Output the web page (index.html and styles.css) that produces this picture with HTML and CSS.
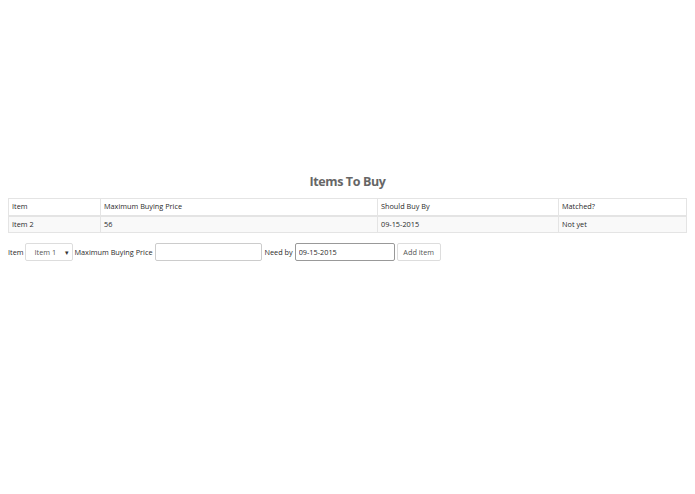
FILE: index.html
```html
<!DOCTYPE html>
<html>
<head>
<meta charset="utf-8">
<link rel="stylesheet" href="styles.css">
</head>
<body>
<div class="spacer"></div>
<h2 class="title">Items To Buy</h2>
<table class="items">
  <thead>
    <tr><th class="c1">Item</th><th class="c2">Maximum Buying Price</th><th class="c3">Should Buy By</th><th class="c4">Matched?</th></tr>
  </thead>
  <tbody>
    <tr><td>Item 2</td><td>56</td><td>09-15-2015</td><td>Not yet</td></tr>
  </tbody>
</table>
<form class="add-form">
  <label class="lbl">Item</label>
  <div class="select"><span>Item 1</span><span class="caret">&#9662;</span></div>
  <label class="lbl">Maximum Buying Price</label>
  <input class="field price" type="text">
  <label class="lbl">Need by</label>
  <input class="field date" type="text" value="09-15-2015">
  <button class="btn" type="button">Add item</button>
</form>
</body>
</html>
```

FILE: styles.css
```css
html, body {
  margin: 0;
  padding: 0;
  background: #fff;
}
body {
  padding: 0 8px;
  font-family: "Open Sans", "Noto Sans", sans-serif;
  font-size: 7.3px;
  font-weight: 500;
  color: #2a2a2a;
}
.spacer {
  height: 173px;
}
.title {
  margin: 0;
  height: 18px;
  line-height: 18px;
  text-align: center;
  font-size: 12.5px;
  letter-spacing: -0.4px;
  font-weight: 700;
  color: #666;
}
.items {
  margin-top: 7px;
  width: 100%;
  border-collapse: collapse;
  border: 1px solid #e4e4e4;
  table-layout: fixed;
}
.items th, .items td {
  box-sizing: border-box;
  text-align: left;
  font-weight: 500;
  height: 17px;
  padding: 0 3px;
  border: 1px solid #e4e4e4;
  line-height: 15px;
  color: #2a2a2a;
}
.items th {
  border-bottom: 2px solid #e4e4e4;
}
.items tbody tr {
  background: #f9f9f9;
}
.c1 { width: 92px; }
.c2 { width: 277px; }
.c3 { width: 181px; }
.add-form {
  margin-top: 10px;
  display: flex;
  align-items: center;
  gap: 2px;
  height: 18px;
}
.lbl {
  color: #2a2a2a;
}
.select {
  display: flex;
  align-items: center;
  justify-content: space-between;
  padding: 0 3px 0 9px;
  margin-left: -1px;
  box-sizing: border-box;
  width: 48px;
  height: 18px;
  border: 1px solid #ddd;
  border-radius: 2px;
  color: #555;
  font-weight: 400;
}
.caret {
  font-size: 7px;
  color: #333;
}
.field {
  box-sizing: border-box;
  height: 18px;
  border: 1px solid #ccc;
  border-radius: 2px;
  padding: 0 3px;
  font-family: inherit;
  font-size: 7.3px;
  font-weight: 500;
  color: #2a2a2a;
  margin: 0;
}
.price { width: 107px; margin-right: 1px; }
.date { width: 100px; border-color: #999; }
.btn {
  box-sizing: border-box;
  height: 18px;
  width: 44px;
  border: 1px solid #ddd;
  border-radius: 2px;
  background: #fff;
  font-family: inherit;
  font-size: 7.3px;
  font-weight: 400;
  color: #555;
  padding: 0;
  margin: 0;
}
```
